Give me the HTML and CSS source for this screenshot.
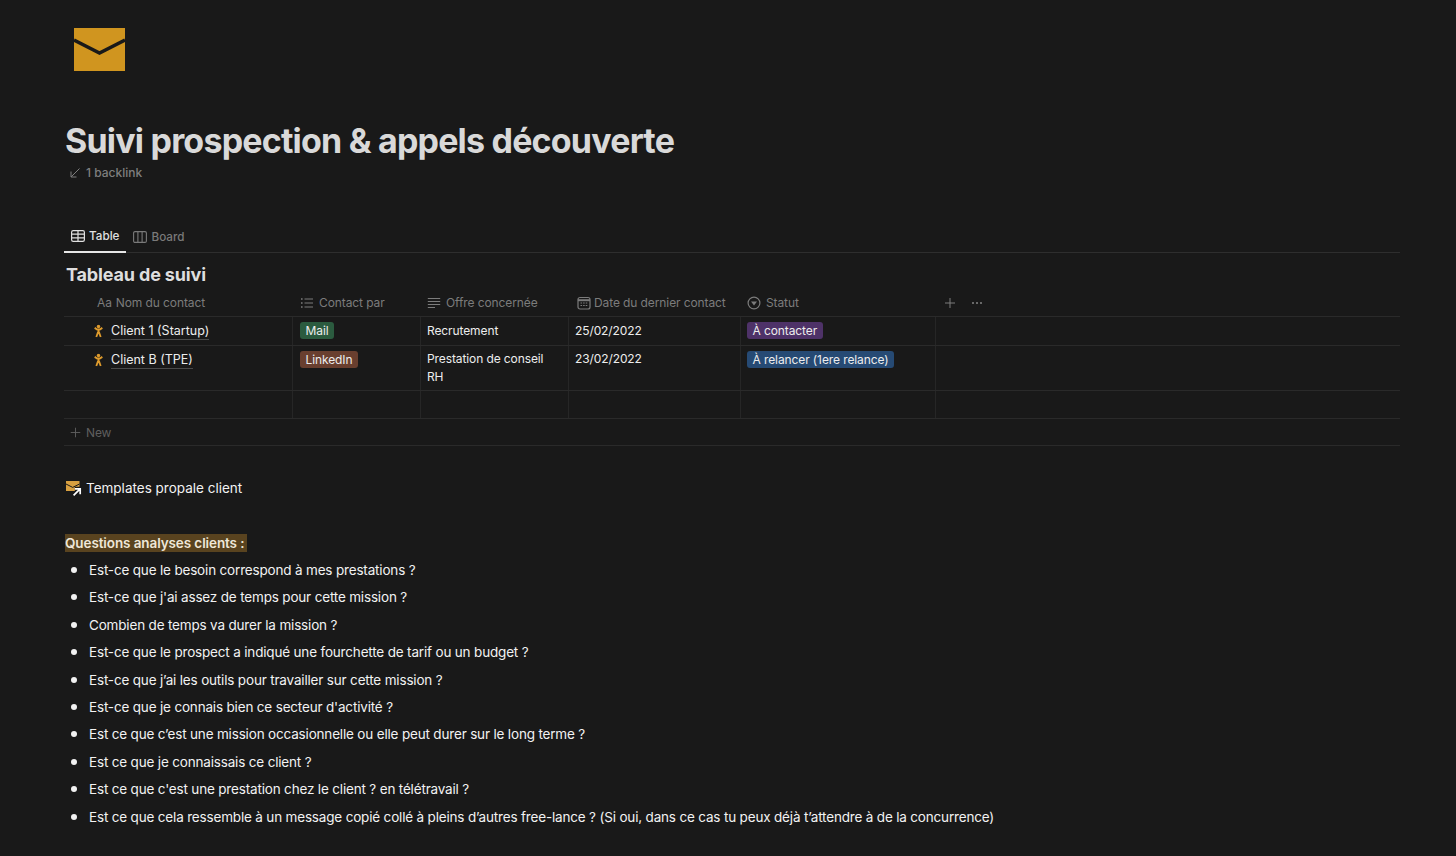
FILE: index.html
```html
<!DOCTYPE html>
<html lang="fr">
<head>
<meta charset="utf-8">
<title>Suivi prospection &amp; appels découverte</title>
<link rel="stylesheet" href="styles.css">
</head>
<body>
<main class="page">
  <svg class="page-icon" viewBox="0 0 51 43" aria-hidden="true">
    <rect width="51" height="43" fill="#d0951f"/>
    <path d="M0 12 L25.5 25 L51 12" fill="none" stroke="#191919" stroke-width="3.4"/>
  </svg>
  <h1 class="title">Suivi prospection &amp; appels découverte</h1>
  <div class="backlink">
    <svg class="backlink-icon" viewBox="0 0 12 12" aria-hidden="true"><path d="M10.5 1.5 L2 10 M2 4.5 V10 H7.5" fill="none" stroke="currentColor" stroke-width="1"/></svg>
    <span>1 backlink</span>
  </div>

  <nav class="tabs">
    <div class="tab tab-active">
      <svg class="tab-icon" viewBox="0 0 14 12" aria-hidden="true"><rect x=".6" y=".6" width="12.8" height="10.8" rx="1.6" fill="none" stroke="currentColor" stroke-width="1.2"/><path d="M.6 4.2H13.4M.6 7.8H13.4M7 .6V11.4" stroke="currentColor" stroke-width="1.2"/></svg>
      <span>Table</span>
    </div>
    <div class="tab">
      <svg class="tab-icon" viewBox="0 0 14 12" aria-hidden="true"><rect x=".6" y=".6" width="12.8" height="10.8" rx="1.4" fill="none" stroke="currentColor" stroke-width="1.1"/><path d="M4.9 .6V11.4M9.1 .6V11.4" stroke="currentColor" stroke-width="1.1"/></svg>
      <span>Board</span>
    </div>
  </nav>

  <h2 class="db-title">Tableau de suivi</h2>

  <div class="table">
    <div class="row head">
      <div class="cell c1 hcell"><span class="aa">Aa</span><span>Nom du contact</span></div>
      <div class="cell c2 hcell">
        <svg class="h-icon" viewBox="0 0 14 14" aria-hidden="true"><path d="M4.5 3H13M4.5 7H13M4.5 11H13" stroke="currentColor" stroke-width="1.2"/><path d="M1 3H2.6M1 7H2.6M1 11H2.6" stroke="currentColor" stroke-width="1.5"/></svg>
        <span>Contact par</span></div>
      <div class="cell c3 hcell">
        <svg class="h-icon" viewBox="0 0 14 14" aria-hidden="true"><path d="M.8 2.5H13.2M.8 5.5H13.2M.8 8.5H13.2M.8 11.5H8" stroke="currentColor" stroke-width="1.2"/></svg>
        <span>Offre concernée</span></div>
      <div class="cell c4 hcell">
        <svg class="h-icon" viewBox="0 0 14 14" aria-hidden="true"><rect x="1" y="1.5" width="12" height="11.5" rx="2" fill="none" stroke="currentColor" stroke-width="1.2"/><path d="M1 4.2H13" stroke="currentColor" stroke-width="2"/><path d="M3.5 7H10.5M3.5 9.5H10.5" stroke="currentColor" stroke-width="1.2" stroke-dasharray="1.6 1"/></svg>
        <span>Date du dernier contact</span></div>
      <div class="cell c5 hcell">
        <svg class="h-icon" viewBox="0 0 14 14" aria-hidden="true"><circle cx="7" cy="7" r="5.9" fill="none" stroke="currentColor" stroke-width="1.2"/><path d="M4 5.6H10L7 9.6Z" fill="currentColor"/></svg>
        <span>Statut</span></div>
      <div class="cell c6 hcell actions">
        <svg class="act-icon" viewBox="0 0 12 12" aria-hidden="true"><path d="M6 1V11M1 6H11" stroke="currentColor" stroke-width="1"/></svg>
        <svg class="act-icon" viewBox="0 0 12 12" aria-hidden="true"><circle cx="2" cy="6" r="1.1" fill="currentColor"/><circle cx="6" cy="6" r="1.1" fill="currentColor"/><circle cx="10" cy="6" r="1.1" fill="currentColor"/></svg>
      </div>
    </div>

    <div class="row">
      <div class="cell c1 sep name">
        <svg class="person" viewBox="0 0 12 14" aria-hidden="true"><use href="#person"/></svg>
        <span class="link">Client 1 (Startup)</span></div>
      <div class="cell c2 sep"><span class="tag green">Mail</span></div>
      <div class="cell c3 sep">Recrutement</div>
      <div class="cell c4 sep">25/02/2022</div>
      <div class="cell c5 sep"><span class="tag purple">À contacter</span></div>
      <div class="cell c6"></div>
    </div>

    <div class="row row-tall">
      <div class="cell c1 sep name">
        <svg class="person" viewBox="0 0 12 14" aria-hidden="true"><use href="#person"/></svg>
        <span class="link">Client B (TPE)</span></div>
      <div class="cell c2 sep"><span class="tag brown">LinkedIn</span></div>
      <div class="cell c3 sep">Prestation de conseil RH</div>
      <div class="cell c4 sep">23/02/2022</div>
      <div class="cell c5 sep"><span class="tag blue">À relancer (1ere relance)</span></div>
      <div class="cell c6"></div>
    </div>

    <div class="row empty">
      <div class="cell c1 sep"></div>
      <div class="cell c2 sep"></div>
      <div class="cell c3 sep"></div>
      <div class="cell c4 sep"></div>
      <div class="cell c5 sep"></div>
      <div class="cell c6"></div>
    </div>

    <div class="new-row">
      <svg class="new-icon" viewBox="0 0 12 12" aria-hidden="true"><path d="M6 .8V11.2M.8 6H11.2" stroke="currentColor" stroke-width="1"/></svg>
      <span>New</span>
    </div>
  </div>

  <div class="page-link">
    <svg class="link-icon" viewBox="0 0 16 16" aria-hidden="true">
      <rect x="0" y="0" width="13.5" height="10" fill="#d8a040"/>
      <path d="M0 3 L6.7 6.4 L13.5 3" fill="none" stroke="#191919" stroke-width="1"/>
      <path d="M7.6 14.4 L13.6 8.4 M8.8 7.8 H14.2 V13.2" fill="none" stroke="#191919" stroke-width="4.2"/>
      <path d="M7.6 14.4 L13.6 8.4 M8.8 7.8 H14.2 V13.2" fill="none" stroke="#fff" stroke-width="1.7"/>
    </svg>
    <span>Templates propale client</span>
  </div>

  <p class="section"><mark class="hl">Questions analyses clients :</mark></p>

  <ul class="list">
    <li>Est-ce que le besoin correspond à mes prestations ?</li>
    <li>Est-ce que j'ai assez de temps pour cette mission ?</li>
    <li>Combien de temps va durer la mission ?</li>
    <li>Est-ce que le prospect a indiqué une fourchette de tarif ou un budget ?</li>
    <li>Est-ce que j’ai les outils pour travailler sur cette mission ?</li>
    <li>Est-ce que je connais bien ce secteur d'activité ?</li>
    <li>Est ce que c’est une mission occasionnelle ou elle peut durer sur le long terme ?</li>
    <li>Est ce que je connaissais ce client ?</li>
    <li>Est ce que c'est une prestation chez le client ? en télétravail ?</li>
    <li>Est ce que cela ressemble à un message copié collé à pleins d’autres free-lance ? (Si oui, dans ce cas tu peux déjà t’attendre à de la concurrence)</li>
  </ul>
</main>
<svg class="defs" aria-hidden="true">
  <symbol id="person" viewBox="0 0 12 14">
    <circle cx="6" cy="2" r="1.9" fill="#dd9a2c"/>
    <path d="M1.8 3.6 L4.6 5.4 H7.4 L10.2 3.6 M6 5 V8.5 M5.6 8 L3.6 13.6 M6.4 8 L8.4 13.6" fill="none" stroke="#dd9a2c" stroke-width="2"/>
  </symbol>
</svg>
</body>
</html>
```
FILE: styles.css
```css
* { box-sizing: border-box; }
html, body { margin: 0; padding: 0; }
body {
  background: #191919;
  color: #f2f2f2;
  font-family: Inter, "Liberation Sans", sans-serif;
  font-size: 13.5px;
  overflow: hidden;
  height: 856px;
}
.defs { width: 0; height: 0; display: block; }
.page { padding: 28px 56px 0 64px; }
.page-icon { display: block; width: 51px; height: 43px; margin-left: 10px; }
.title {
  margin: 48px 0 0 1px;
  font-size: 34px;
  line-height: 44px;
  font-weight: 700;
  color: #d9d9d9;
  letter-spacing: -0.8px;
}
.backlink {
  display: flex;
  align-items: center;
  gap: 5px;
  margin: 2px 0 0 5px;
  height: 16px;
  font-size: 12px;
  line-height: 16px;
  color: #7f7f7f;
  font-weight: 500;
}
.backlink-icon { width: 12px; height: 12px; }
.tabs {
  display: flex;
  margin-top: 40px;
  height: 32px;
  border-bottom: 1px solid #2e2e2e;
}
.tab {
  display: flex;
  align-items: center;
  gap: 4px;
  padding: 0 7px;
  height: 32px;
  font-size: 11.7px;
  color: #7a7a7a;
  font-weight: 500;
}
.tab-active { color: #e0e0e0; border-bottom: 2px solid #e6e6e6; }
.tab-icon { width: 14px; height: 12px; }
.db-title {
  margin: 9px 0 0 2px;
  font-size: 18px;
  line-height: 26px;
  font-weight: 700;
  letter-spacing: -0.15px;
  color: #dedede;
}
.table { font-size: 12px; letter-spacing: -0.1px; }
.row {
  display: grid;
  grid-template-columns: 229px 128px 148px 172px 195px 1fr;
  min-height: 29px;
  border-bottom: 1px solid #2a2a2a;
}
.head { height: 29px; color: #7c7c7c; }
.empty { height: 28px; min-height: 28px; }
.cell { padding: 5px 7px 4px; line-height: 17.5px; color: #ededed; }
.c3, .c4, .c5 { padding-left: 6px; }
.row-tall .c3, .row-tall .c4 { padding-top: 4px; padding-bottom: 5px; }
.sep { border-right: 1px solid #262626; }
.hcell { display: flex; align-items: center; gap: 5px; color: #7c7c7c; font-weight: 400; letter-spacing: -0.1px; }
.c4.hcell { padding-left: 8px; gap: 3px; }
.c1.hcell { padding-left: 33px; gap: 4px; }
.h-icon { width: 14px; height: 14px; flex: none; }
.actions { padding-left: 8px; gap: 15px; }
.act-icon { width: 12px; height: 12px; }
.name { display: flex; align-items: flex-start; gap: 7px; padding-left: 29px; }
.person { width: 11px; height: 14px; margin-top: 2px; flex: none; }
.link { border-bottom: 1px solid #4a4a4a; line-height: 17px; height: 18px; font-weight: 400; font-size: 12.5px; letter-spacing: 0; }
.tag {
  display: inline-block;
  padding: 0 5.5px;
  height: 17px;
  line-height: 17px;
  border-radius: 3px;
  font-size: 12px;
  letter-spacing: -0.1px;
  color: #ededed;
}
.green { background: #2b5b3f; }
.brown { background: #693f2f; }
.purple { background: #4e3268; }
.blue { background: #264a74; }
.new-row {
  display: flex;
  align-items: center;
  gap: 5px;
  height: 27px;
  padding-left: 6px;
  color: #5f5f5f;
  font-size: 12px;
  border-bottom: 1px solid #2a2a2a;
}
.new-icon { width: 11px; height: 11px; }
.page-link {
  display: flex;
  align-items: center;
  gap: 4px;
  margin: 30px 0 0 2px;
  height: 24px;
  letter-spacing: 0;
  color: #f2f2f2;
}
.link-icon { width: 16px; height: 16px; margin-top: 1px; }
.section { margin: 31px 0 0 1px; line-height: 24px; font-weight: 600; letter-spacing: -0.1px; }
.hl { background: #59431f; color: #efe7d8; padding: 1px 3px 1px 0; }
.list { margin: 0; padding: 0 0 0 25px; list-style: disc; }
.list li { height: 27.4px; line-height: 27.4px; letter-spacing: -0.175px; color: #f2f2f2; }
.list li::marker { font-size: 18px; }
```
